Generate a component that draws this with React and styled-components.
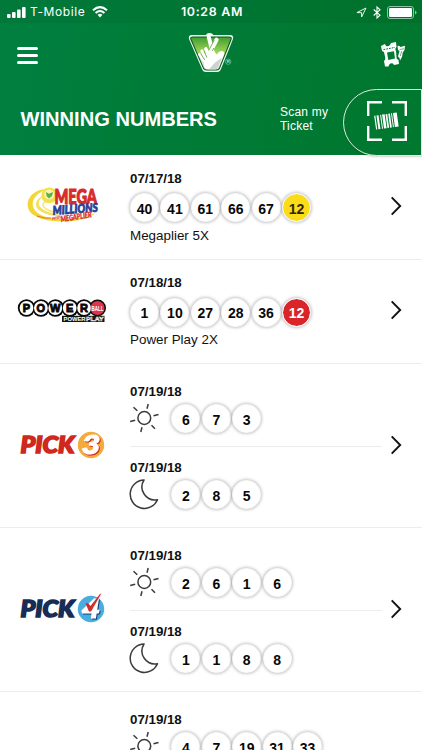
import React from "react";
import styled, { createGlobalStyle } from "styled-components";

const GlobalStyle = createGlobalStyle`
  * { box-sizing: border-box; }
  body { margin: 0; background: #fff; overflow: hidden; font-family: "Liberation Sans", Arial, sans-serif; }
`;

const Screen = styled.div`
  width: 422px;
  height: 750px;
  overflow: hidden;
  background: #fff;
  color: #111;
`;

const Header = styled.header`
  height: 155px;
  background: linear-gradient(100deg, #007f3f 0%, #007b36 50%, #00762d 100%);
  color: #fff;
`;

const StatusBar = styled.div`
  display: grid;
  grid-template-columns: 1fr auto 1fr;
  align-items: center;
  height: 23px;
  padding: 1px 5px 0 7px;
  background: rgba(0, 40, 10, 0.07);
  font: 400 12px/16px Inter, sans-serif;
`;

const StatusGroup = styled.div`
  display: flex;
  align-items: center;
  justify-content: ${(p) => (p.$end ? "flex-end" : "flex-start")};
  gap: ${(p) => (p.$end ? "6px" : "5px")};
`;

const Carrier = styled.span`
  letter-spacing: 0.6px;
  margin-right: 2px;
`;

const Clock = styled.span`
  font-weight: 600;
  font-size: 12.4px;
  letter-spacing: 0.7px;
`;

const NavBar = styled.div`
  display: grid;
  grid-template-columns: 1fr auto 1fr;
  align-items: center;
  height: 64px;
  padding: 0 17px;
`;

const MenuButton = styled.button`
  display: flex;
  flex-direction: column;
  gap: 4px;
  width: 21px;
  padding: 0;
  border: 0;
  background: none;
`;

const MenuBar = styled.span`
  height: 3px;
  border-radius: 1.5px;
  background: #fff;
`;

const Brand = styled.div`
  display: flex;
  padding-bottom: 4px;
`;

const TicketButton = styled.button`
  justify-self: end;
  display: flex;
  padding: 0 0 2px;
  border: 0;
  background: none;
`;

const TitleBar = styled.div`
  display: flex;
  align-items: center;
  height: 68px;
  padding-left: 20.5px;
`;

const Title = styled.h1`
  flex: 1;
  margin: 0 0 4px;
  font-size: 20.1px;
  line-height: 24px;
`;

const ScanLabel = styled.span`
  width: 63px;
  margin-bottom: 4px;
  font-size: 12px;
  line-height: 14.5px;
  letter-spacing: 0.22px;
`;

const ScanButton = styled.button`
  display: flex;
  align-items: center;
  align-self: flex-end;
  width: 79px;
  height: 67px;
  margin-bottom: -1px;
  padding: 0 0 4px 23px;
  border: 1.5px solid #d9f1e2;
  border-right-width: 1px;
  border-radius: 34px 0 0 34px;
  background: #00782f;
  box-shadow: 0 1px 2px rgba(0, 0, 0, 0.18);
`;

const Game = styled.section`
  display: grid;
  grid-template-columns: 130px 252px 1fr;
  align-items: center;
  height: ${(p) => (p.$tall ? "164px" : "104.5px")};
  border-bottom: 1.5px solid #ededed;
`;

const LogoCell = styled.div`
  display: flex;
  padding-left: 18px;
`;

const ArrowCell = styled.div`
  display: flex;
  padding: 0 0 2px 8px;
`;

const Draws = styled.div`
  align-self: start;
  padding-top: ${(p) => (p.$tall ? "19.5px" : "15.5px")};
`;

const Draw = styled.div`
  display: block;
`;

const DrawDate = styled.div`
  font-size: 13.3px;
  font-weight: 700;
  line-height: 16px;
`;

const BallRow = styled.div`
  display: flex;
  align-items: center;
  gap: 1.4px;
  margin-top: ${(p) => (p.$tight ? "-3px" : "6.5px")};
  height: ${(p) => (p.$tight ? "44px" : "29px")};
`;

const PeriodIcon = styled.span`
  display: flex;
  width: 40px;
  padding-bottom: 2px;
`;

const Ball = styled.span`
  display: flex;
  align-items: center;
  justify-content: center;
  width: 29px;
  height: 29px;
  padding-top: 2px;
  border: 1.5px solid #fff;
  border-radius: 50%;
  background: ${(p) => p.$fill || "#fff"};
  background-clip: padding-box;
  box-shadow: 0 0 3px 1px rgba(0, 0, 0, 0.22);
  color: ${(p) => p.$ink || "#080808"};
  font-size: 14px;
  font-weight: 700;
`;

const Multiplier = styled.div`
  margin-top: 5.5px;
  font-size: 13.4px;
  line-height: 16px;
`;

const Divider = styled.hr`
  height: 1.5px;
  margin: 5px 0 12.5px;
  border: 0;
  background: #ececec;
`;

const Art = styled.svg`
  display: block;
  flex: none;
  overflow: visible;
`;

const Numeral = styled.text`
  font: italic 900 27px Lato, sans-serif;
  fill: #fff;
  stroke: #fff;
  stroke-width: 1px;
  filter: drop-shadow(1.4px 1.4px 0 ${(p) => p.$shade});
`;

const Wordmark = styled.text`
  font: italic 900 22px Lato, sans-serif;
  fill: ${(p) => p.$ink};
  stroke: ${(p) => p.$ink};
  stroke-width: 1.5px;
`;

const SignalIcon = () => (
  <Art width="18" height="11" viewBox="0 0 18 11" fill="#fff">
    <rect x="0" y="7" width="3.6" height="4" rx="1" />
    <rect x="5" y="5" width="3.6" height="6" rx="1" />
    <rect x="10" y="2.5" width="3.6" height="8.5" rx="1" />
    <rect x="15" y="0" width="3.6" height="11" rx="1" />
  </Art>
);

const WifiIcon = () => (
  <Art width="16" height="12" viewBox="0 0 16 12" fill="none" stroke="#fff" strokeWidth="2">
    <path d="M1 4.3Q8-2 15 4.3" />
    <path d="M3.6 7.1Q8 3 12.4 7.1" />
    <path d="M5.6 8.7Q8 6.8 10.4 8.7L8 11.5Z" fill="#fff" stroke="none" />
  </Art>
);

const LocationIcon = () => (
  <Art width="11" height="11" viewBox="0 0 11 11" fill="none" stroke="#e8f5ec" strokeWidth="1">
    <path d="M.9 5.6L10 1L5.6 10V5.7Z" />
  </Art>
);

const BluetoothIcon = () => (
  <Art width="8" height="13" viewBox="0 0 8 13" fill="none" stroke="#fff" strokeWidth="1.1">
    <path d="M.7 3.5L7 9.2L4 12V1L7 3.8L.7 9.5" />
  </Art>
);

const BatteryIcon = () => (
  <Art width="30" height="13" viewBox="0 0 30 13">
    <rect x=".5" y=".5" width="26" height="12" rx="2.5" fill="none" stroke="#8cc5a3" />
    <rect x="2" y="2" width="23" height="9" rx="1.2" fill="#fff" />
    <path d="M28 4.5Q29.5 5 29.5 6.5T28 8.5Z" fill="#8cc5a3" />
  </Art>
);

const LotteryMark = () => (
  <Art width="46" height="40" viewBox="0 0 46 40">
    <defs>
      <linearGradient id="shield" x1="0" y1="0" x2="0" y2="1">
        <stop offset="0" stopColor="#3f9d2c" />
        <stop offset=".48" stopColor="#a3d65c" />
        <stop offset=".62" stopColor="#e4efdc" />
        <stop offset="1" stopColor="#d3d9d4" />
      </linearGradient>
    </defs>
    <path d="M4 2H18Q19-.5 21.5 0Q24-.3 25.5 2H42Q46 2 45 6L33 36Q32 39 29 39H18Q15 39 14 36L1 6Q0 2 4 2Z" fill="#eef8ea" />
    <path d="M5 4H41Q44 4 43 6.5L31.7 34.6Q31 37 28.5 37H18.5Q16 37 15.2 34.6L3 6.5Q2 4 5 4Z" fill="url(#shield)" stroke="#075a28" strokeWidth="1.1" />
    <g fill="none" stroke="#fff" strokeLinecap="round">
      <path d="M20.7 3.8L24.5 19" strokeWidth="4" />
      <path d="M28.6 6.8L22 19" strokeWidth="4.2" />
      <path d="M17.8 15.8L20.5 22" strokeWidth="3.4" />
      <path d="M14 18L17.5 25" strokeWidth="3.2" />
      <path d="M11.5 21.5L16.5 28" strokeWidth="2.8" />
    </g>
    <path d="M16 21L26 18L29 22Q30.5 18 34 18Q37 18.5 36 21.5L30.5 34Q29.5 36.2 27.5 36.2H19.5Q17 36.2 16.4 33.8L15.5 28Z" fill="#fff" />
    <path d="M26.2 7.2L20.8 17.5M25.8 15L24.3 18M15.9 17.8L19 24.5M12.8 20.8L16.8 27" fill="none" stroke="#5d9d46" strokeWidth=".8" />
    <path d="M26.5 30L34 24.5L30.2 34Q29.3 36.2 27 36.2H21Z" fill="#ccd4ce" />
    <circle cx="40.2" cy="28.7" r="2.7" fill="none" stroke="#8fcaa6" strokeWidth=".6" />
    <text x="40.2" y="30.2" fill="#b9dfc6" fontSize="4.2" fontWeight="700" textAnchor="middle">R</text>
  </Art>
);

const TicketsIcon = () => (
  <Art width="24" height="25" viewBox="0 0 24 25">
    <path d="M0 4L4 2L5 4Q7 5 9 3L10 1L15 0L15.5 5Q14 6 14.5 8L15 9L15.5 15Q15 17 17.5 18L18 22L13 23L12 21.5Q9 20.5 8 23L7.5 24.5L4 24.5L3 19Q4.5 18 4.3 16L3 10Q1 9.5 .8 8Z" fill="#fff" />
    <path d="M6 10.5L13 9.3L14 16.5L7.3 18Z" fill="#007a35" />
    <path d="M2.5 7.6L14 5.4" stroke="#007a35" strokeWidth="1" strokeDasharray="1.8 1" />
    <path d="M16.5 4L18 3.8L19.5 5L24 3.8L23.5 8L21.8 10.5L21 15L19 18.5L18.5 16L17 14.5L18.5 9L17 8Z" fill="#fff" />
    <path d="M18.5 7.5L23 6.8M20.7 9L19.3 14" stroke="#007a35" strokeWidth=".6" />
  </Art>
);

const BarcodeIcon = () => (
  <Art width="40" height="40" viewBox="0 0 40 40" fill="none" stroke="#fff">
    <path d="M1.2 15V1.2H15M25 1.2H38.8V15M38.8 25V38.8H25M15 38.8H1.2V25" strokeWidth="2.4" />
    <g transform="rotate(-8 20 20)" fill="#fff" stroke="none">
      <rect x="8" y="13" width="1.2" height="14" />
      <rect x="10.4" y="13" width="2" height="14" />
      <rect x="14" y="13" width="1" height="14" />
      <rect x="16" y="13" width="2.6" height="14" />
      <rect x="19.5" y="13" width="1.7" height="14" />
      <rect x="22.2" y="13" width="1.7" height="14" />
      <rect x="25" y="13" width="1" height="14" />
      <rect x="27" y="13" width="3.8" height="14" />
    </g>
  </Art>
);

const ChevronIcon = () => (
  <Art width="12" height="20" viewBox="0 0 12 20" fill="none" stroke="#111" strokeWidth="1.9">
    <path d="M1.7 1.3L10.2 10L1.7 18.7" />
  </Art>
);

const SunIcon = () => (
  <Art width="30" height="30" viewBox="0 0 30 30" fill="none" stroke="#3b3b3b" strokeWidth="1.5">
    <circle cx="14.3" cy="15" r="6.4" />
    <path d="M17 5.7L18.2 1M23.5 12.8L28.5 11.5M21.5 22.2L25 25.7M12 24.2L10.8 29M5.2 17.3L.2 18.5M7.3 7.8L3.5 4.2" />
  </Art>
);

const MoonIcon = () => (
  <Art width="30" height="30" viewBox="0 0 30 30" fill="none" stroke="#3b3b3b" strokeWidth="1.5" strokeLinejoin="round">
    <path d="M14 1A14.2 14.2 0 1 0 27.5 20.7A13 13 0 0 1 14 1Z" />
  </Art>
);

const MegaMillionsLogo = () => (
  <Art width="88" height="42" viewBox="0 0 88 42">
    <path d="M29 3C12 4 7 16 11 24C18 39 67 39 78 26C67 34 34 36 21 28C10 20 14 9 29 3Z" fill="#f3d632" />
    <path d="M30 8C17 11 14 21 24 26C31 30 42 31 49 30C30 28 19 22 21 16C22 12 26 9 30 8Z" fill="#f5e05b" />
    <path d="M34 13C24 15 22 20 30 24C38 28 48 27 48 27" fill="none" stroke="#f4e77e" strokeWidth="1.5" />
    <circle cx="31.3" cy="9.4" r="7.9" fill="#f2df4c" />
    <circle cx="31.3" cy="8.5" r="5" fill="#f7f3b0" />
    <path d="M28 6L31 7.7L35 6L34 10L31 12.5L28.5 10Z" fill="#5bb347" />
    <text x="36.5" y="18" fill="#d72b2d" stroke="#d72b2d" strokeWidth="1.2" fontFamily="Lato" fontSize="20.5" fontWeight="900" textLength="42.5" lengthAdjust="spacingAndGlyphs">MEGA</text>
    <text transform="rotate(-4 35 28)" x="35" y="28.8" fill="#283e9b" stroke="#283e9b" strokeWidth=".8" fontFamily="Lato" fontSize="12" fontWeight="900" fontStyle="italic" textLength="45" lengthAdjust="spacingAndGlyphs">MILLIONS</text>
    <text transform="rotate(-8 34 34)" x="34" y="33.8" fill="#d72b2d" fontSize="4.5" fontWeight="700" fontStyle="italic">with</text>
    <text transform="rotate(-9 43 35)" x="43" y="36" fill="#d72b2d" stroke="#d72b2d" strokeWidth=".3" fontFamily="Lato" fontSize="8" fontWeight="900" fontStyle="italic" textLength="31" lengthAdjust="spacingAndGlyphs">MEGAPLIER</text>
    <path d="M19 30Q27 33 33 32" fill="none" stroke="#d95c34" strokeWidth=".8" />
  </Art>
);

const PowerballLogo = () => (
  <Art width="89" height="24" viewBox="0 0 89 24">
    {[8.5, 23, 37.5, 52, 66].map((x) => <circle key={x} cx={x} cy="9" r="8.7" fill="#080808" />)}
    <circle cx="79.5" cy="9" r="8.5" fill="#080808" />
    {["P", "O", "W", "E", "R"].map((letter, i) => (
      <React.Fragment key={letter}>
        <circle cx={8.5 + i * 14.4} cy="9" r="6.9" fill="#fff" />
        <text x={8.5 + i * 14.4} y="12.9" fill="#080808" stroke="#080808" strokeWidth=".9" fontSize="11" fontWeight="700" textAnchor="middle">{letter}</text>
      </React.Fragment>
    ))}
    <circle cx="79.5" cy="9" r="7" fill="#dc3448" />
    <text x="73.5" y="11.7" fill="#fff" fontSize="7" fontWeight="700" textLength="12" lengthAdjust="spacingAndGlyphs">BALL</text>
    <rect x="44" y="16.8" width="42.5" height="6.2" fill="#151515" />
    <text x="45.5" y="22.2" fill="#fff" fontSize="6" fontWeight="700" textLength="22" lengthAdjust="spacingAndGlyphs">POWER</text>
    <text x="68" y="22.2" fill="#151515" stroke="#fff" strokeWidth=".5" fontSize="6" fontWeight="700" textLength="17.5" lengthAdjust="spacingAndGlyphs">PLAY</text>
  </Art>
);

const PickLogo = ({ number }) => {
  const three = number === 3;
  return (
    <Art width="90" height="32" viewBox="0 0 90 32">
      <Wordmark $ink={three ? "#cf281e" : "#172d57"} x="2.5" y="23.3" textLength="54" lengthAdjust="spacingAndGlyphs">PICK</Wordmark>
      <circle cx="73" cy="15" r="13.2" fill={three ? "#f4aa3d" : "#48aee0"} />
      <Numeral $shade={three ? "#cf281e" : "#173f72"} x="63.5" y="24" textLength="19" lengthAdjust="spacingAndGlyphs">{number}</Numeral>
      {!three && <path d="M67.5 9.5L70 9L72.5 12L81.5.5L83.5-.8L73 17.5H71Z" fill="#d12d2a" />}
    </Art>
  );
};

const games = [
  { id: "mega", logo: <MegaMillionsLogo />, extra: "Megaplier 5X", fill: "#fbdc16", ink: "#2c270b", draws: [{ date: "07/17/18", balls: [40, 41, 61, 66, 67, 12] }] },
  { id: "power", logo: <PowerballLogo />, extra: "Power Play 2X", fill: "#d9252a", ink: "#fff", draws: [{ date: "07/18/18", balls: [1, 10, 27, 28, 36, 12] }] },
  { id: "pick3", logo: <PickLogo number={3} />, draws: [{ date: "07/19/18", balls: [6, 7, 3] }, { date: "07/19/18", balls: [2, 8, 5] }] },
  { id: "pick4", logo: <PickLogo number={4} />, draws: [{ date: "07/19/18", balls: [2, 6, 1, 6] }, { date: "07/19/18", balls: [1, 1, 8, 8] }] },
  { id: "cash", partial: true, draws: [{ date: "07/19/18", balls: [4, 7, 19, 31, 33] }] },
];

const GameRow = ({ game }) => {
  const daily = !game.extra;
  return (
    <Game $tall={daily}>
      <LogoCell>{game.logo}</LogoCell>
      <Draws $tall={daily}>
        {game.draws.map((draw, i) => (
          <React.Fragment key={i}>
            {i > 0 && <Divider />}
            <Draw>
              <DrawDate>{draw.date}</DrawDate>
              <BallRow $tight={daily}>
                {daily && <PeriodIcon>{i === 0 ? <SunIcon /> : <MoonIcon />}</PeriodIcon>}
                {draw.balls.map((n, j) => {
                  const bonus = game.extra && j === 5;
                  return <Ball key={j} $fill={bonus ? game.fill : undefined} $ink={bonus ? game.ink : undefined}>{n}</Ball>;
                })}
              </BallRow>
            </Draw>
          </React.Fragment>
        ))}
        {game.extra && <Multiplier>{game.extra}</Multiplier>}
      </Draws>
      {!game.partial && <ArrowCell><ChevronIcon /></ArrowCell>}
    </Game>
  );
};

export default function App() {
  return (
    <Screen>
      <GlobalStyle />
      <Header>
        <StatusBar>
          <StatusGroup><SignalIcon /><Carrier>T-Mobile</Carrier><WifiIcon /></StatusGroup>
          <Clock>10:28 AM</Clock>
          <StatusGroup $end><LocationIcon /><BluetoothIcon /><BatteryIcon /></StatusGroup>
        </StatusBar>
        <NavBar>
          <MenuButton aria-label="Menu"><MenuBar /><MenuBar /><MenuBar /></MenuButton>
          <Brand><LotteryMark /></Brand>
          <TicketButton aria-label="Tickets"><TicketsIcon /></TicketButton>
        </NavBar>
        <TitleBar>
          <Title>WINNING NUMBERS</Title>
          <ScanLabel>Scan my<br />Ticket</ScanLabel>
          <ScanButton aria-label="Scan"><BarcodeIcon /></ScanButton>
        </TitleBar>
      </Header>
      <main>
        {games.map((game) => <GameRow key={game.id} game={game} />)}
      </main>
    </Screen>
  );
}
